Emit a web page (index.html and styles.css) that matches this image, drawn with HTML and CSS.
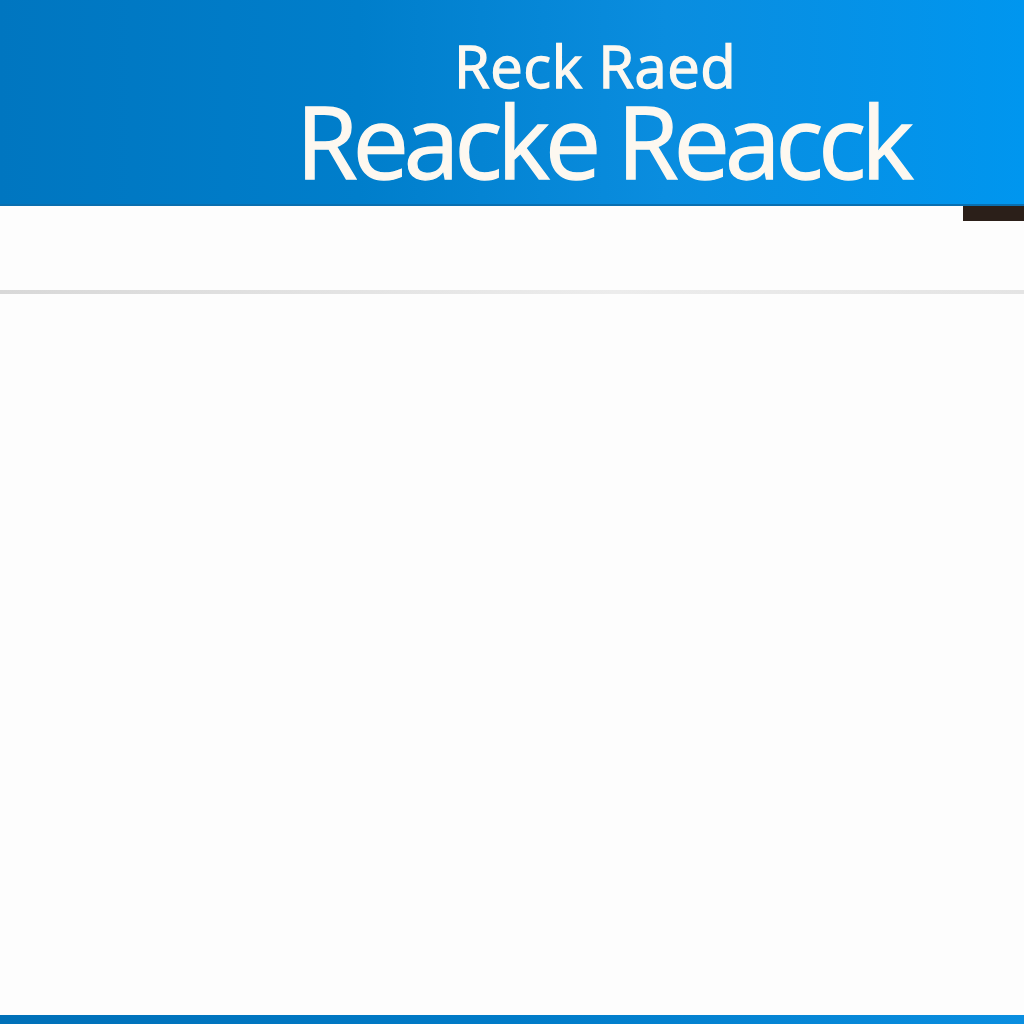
FILE: index.html
```html
<!DOCTYPE html>
<html>
<head>
<meta charset="utf-8">
<link rel="stylesheet" href="styles.css">
</head>
<body>
<div class="page">
  <header class="banner">
    <div class="sub">Reck Raed</div>
    <div class="title">Reacke Reacck</div>
  </header>
  <div class="strip"><div class="tab"></div></div>
  <div class="divider"></div>
  <main class="content"></main>
  <footer class="footbar"></footer>
</div>
</body>
</html>
```
FILE: styles.css
```css
html, body {
  margin: 0;
  padding: 0;
  background: #fdfdfd;
}
.page {
  width: 1024px;
  height: 1024px;
  display: flex;
  flex-direction: column;
  overflow: hidden;
}
.banner {
  height: 206px;
  box-sizing: border-box;
  padding-top: 38px;
  padding-left: 296px;
  background: linear-gradient(90deg, #0076c0 0%, #007ecb 35%, #0a8ddf 65%, #0096ef 100%);
  color: #fdf8f0;
  font-family: "Open Sans", "Noto Sans", sans-serif;
  font-weight: 400;
  -webkit-text-stroke: 1.3px #fdf8f0;
  display: flex;
  flex-direction: column;
  box-shadow: 0 -2px 0 #0a6fb0 inset;
}
.sub {
  font-size: 58px;
  line-height: 56px;
  padding-left: 158px;
  letter-spacing: 0.5px;
}
.title {
  font-size: 100px;
  line-height: 92px;
  letter-spacing: -5px;
}
.strip {
  height: 15px;
  display: flex;
  justify-content: flex-end;
}
.tab {
  width: 61px;
  height: 15px;
  background: #2b1f19;
}
.divider {
  margin-top: 69px;
  height: 4px;
  background: linear-gradient(90deg, #d8d8d8 0%, #e2e2e2 30%, #ececec 60%, #e4e4e4 100%);
}
.content {
  flex: 1;
}
.footbar {
  height: 9px;
  background: linear-gradient(90deg, #0070b8 0%, #007bc8 50%, #0a8ee0 100%);
}
```
